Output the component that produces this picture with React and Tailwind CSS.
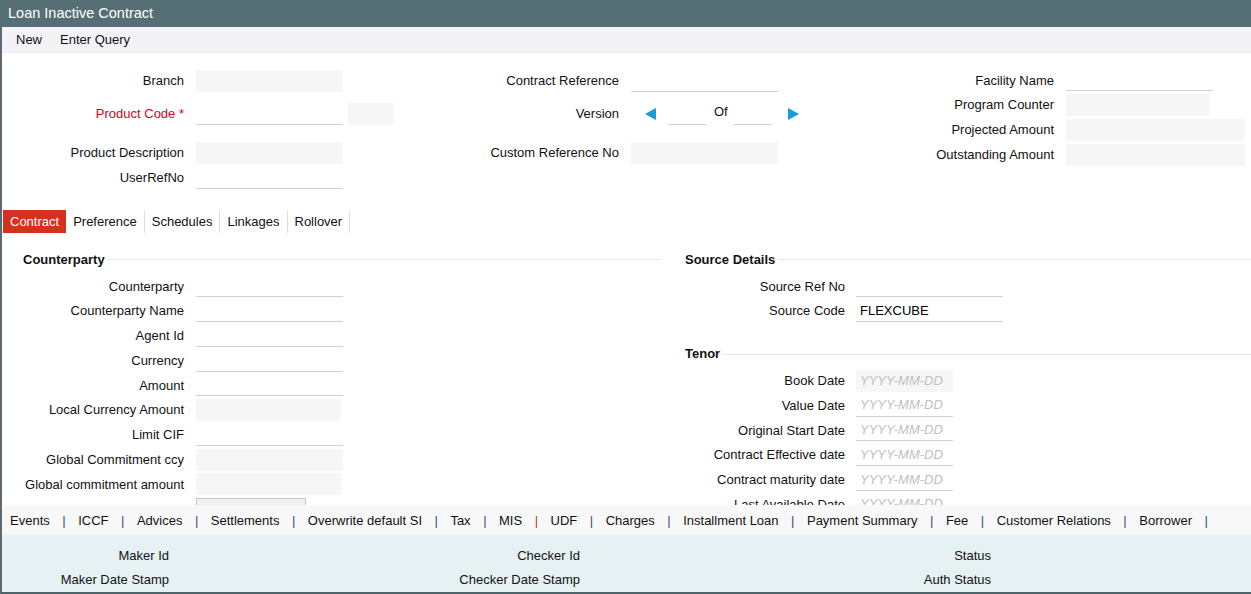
const FONT = "font-['Liberation_Sans',Arial,sans-serif]";

function Box({ kind = 'line', w = 147, value, placeholder, className = '' }) {
  const look =
    kind === 'gray'
      ? 'bg-[#f6f6f6]'
      : 'border-b border-[#d0d0d0] bg-white';
  return (
    <div className={`h-[22px] flex items-center pl-[4px] ${look} ${className}`} style={{ width: w }}>
      {value && <span className="text-[13px] text-black">{value}</span>}
      {placeholder && <span className="text-[13px] italic text-[#c0c0c0]">{placeholder}</span>}
    </div>
  );
}

function Row({ label, labelW, gap = 12, h = 'h-[25px]', red, children, className = '' }) {
  return (
    <div className={`flex items-center ${h} ${className}`}>
      <div
        className={`shrink-0 text-right text-[13px] whitespace-nowrap ${red ? 'text-[#d9001b]' : 'text-[#111]'}`}
        style={{ width: labelW, marginRight: gap }}
      >
        {label}
        {red && <span> *</span>}
      </div>
      {children}
    </div>
  );
}

function Legend({ title, className = '' }) {
  return (
    <div className={`flex items-center h-[18px] ${className}`}>
      <span className="text-[13px] font-bold text-[#111] whitespace-nowrap">{title}</span>
      <div className="flex-1 h-px bg-[#e6e6e6] ml-[3px]" />
    </div>
  );
}

function Tri({ dir }) {
  return (
    <svg width="11" height="12" viewBox="0 0 11 12">
      {dir === 'left' ? (
        <polygon points="11,0 11,12 0,6" fill="#1a9ad6" />
      ) : (
        <polygon points="0,0 0,12 11,6" fill="#1a9ad6" />
      )}
    </svg>
  );
}

const TABS = ['Contract', 'Preference', 'Schedules', 'Linkages', 'Rollover'];

const LINKS = [
  'Events', 'ICCF', 'Advices', 'Settlements', 'Overwrite default SI', 'Tax', 'MIS',
  'UDF', 'Charges', 'Installment Loan', 'Payment Summary', 'Fee', 'Customer Relations', 'Borrower',
];

export default function App() {
  const rowH = 'h-[24.75px]';
  return (
    <div className={`w-[1251px] h-[594px] overflow-hidden bg-white flex flex-col ${FONT}`}>
      {/* title bar */}
      <div className="h-[27px] shrink-0 bg-[#566f74] flex items-center px-[8px]">
        <span className="text-white text-[14.5px]">Loan Inactive Contract</span>
      </div>

      <div className="flex-1 flex flex-col border-l-2 border-[#5b6a72] border-b-[3px] border-b-[#4f6469]">
        {/* toolbar */}
        <div className="h-[26px] shrink-0 bg-[#f3f3f7] border-b border-[#e9e9ee] flex items-center gap-[18px] pl-[14px] pt-[1px] text-[13px] text-[#111]">
          <span>New</span>
          <span>Enter Query</span>
        </div>

        {/* header fields */}
        <div className="h-[151px] shrink-0 flex pt-[15px]">
          <div className="w-[435px] flex flex-col">
            <Row label="Branch" labelW={182}>
              <Box kind="gray" />
            </Row>
            <Row label="Product Code" labelW={182} red className="mt-[8px]">
              <Box />
              <Box kind="gray" w={46} className="ml-[5px]" />
            </Row>
            <Row label="Product Description" labelW={182} className="mt-[14px]">
              <Box kind="gray" />
            </Row>
            <Row label="UserRefNo" labelW={182}>
              <Box />
            </Row>
          </div>

          <div className="w-[435px] flex flex-col">
            <Row label="Contract Reference" labelW={182}>
              <Box />
            </Row>
            <Row label="Version" labelW={182} className="mt-[8px]">
              <div className="flex items-center">
                <div className="ml-[14px]"><Tri dir="left" /></div>
                <Box w={38} className="ml-[12px]" />
                <span className="text-[13px] text-[#111] ml-[8px] -mt-[4px]">Of</span>
                <Box w={38} className="ml-[6px]" />
                <div className="ml-[16px]"><Tri dir="right" /></div>
              </div>
            </Row>
            <Row label="Custom Reference No" labelW={182} className="mt-[14px]">
              <Box kind="gray" />
            </Row>
          </div>

          <div className="flex-1 flex flex-col">
            <Row label="Facility Name" labelW={182} h={rowH}>
              <Box />
            </Row>
            <Row label="Program Counter" labelW={182} h={rowH}>
              <Box kind="gray" w={144} />
            </Row>
            <Row label="Projected Amount" labelW={182} h={rowH}>
              <Box kind="gray" w={179} />
            </Row>
            <Row label="Outstanding Amount" labelW={182} h={rowH}>
              <Box kind="gray" w={179} />
            </Row>
          </div>
        </div>

        {/* tabs */}
        <div className="h-[29px] shrink-0 flex items-end pl-[1px]">
          <div className="flex h-[23px]">
            {TABS.map((t, i) => (
              <div
                key={t}
                className={`px-[7px] pt-[1px] flex items-center text-[13px] ${
                  i === 0 ? 'bg-[#d5311c] text-white' : 'text-[#111] border-r border-[#dedede]'
                }`}
              >
                {t}
              </div>
            ))}
          </div>
        </div>

        {/* tab content */}
        <div className="h-[272px] shrink-0 overflow-hidden flex">
          <div className="w-[658px] pl-[21px] pt-[17.5px] flex flex-col">
            <Legend title="Counterparty" />
            <div className="mt-[5.5px] flex flex-col">
              <Row label="Counterparty" labelW={161} h={rowH}><Box /></Row>
              <Row label="Counterparty Name" labelW={161} h={rowH}><Box /></Row>
              <Row label="Agent Id" labelW={161} h={rowH}><Box /></Row>
              <Row label="Currency" labelW={161} h={rowH}><Box /></Row>
              <Row label="Amount" labelW={161} h={rowH}><Box /></Row>
              <Row label="Local Currency Amount" labelW={161} h={rowH}><Box kind="gray" w={145} /></Row>
              <Row label="Limit CIF" labelW={161} h={rowH}><Box /></Row>
              <Row label="Global Commitment ccy" labelW={161} h={rowH}><Box kind="gray" /></Row>
              <Row label="Global commitment amount" labelW={161} h={rowH}><Box kind="gray" w={145} /></Row>
              <div className="ml-[173px] mt-[1px] w-[110px] h-[22px] border border-[#c9c9c9] bg-[#f1f1ef]" />
            </div>
          </div>

          <div className="flex-1 pl-[25px] pt-[17.5px] flex flex-col">
            <Legend title="Source Details" />
            <div className="mt-[5.5px] flex flex-col">
              <Row label="Source Ref No" labelW={160} gap={11} h={rowH}><Box /></Row>
              <Row label="Source Code" labelW={160} gap={11} h={rowH}><Box value="FLEXCUBE" /></Row>
            </div>
            <Legend title="Tenor" className="mt-[21.5px]" />
            <div className="mt-[5.5px] flex flex-col">
              <Row label="Book Date" labelW={160} gap={11} h={rowH}>
                <Box kind="gray" w={97} placeholder="YYYY-MM-DD" />
              </Row>
              <Row label="Value Date" labelW={160} gap={11} h={rowH}>
                <Box w={97} placeholder="YYYY-MM-DD" />
              </Row>
              <Row label="Original Start Date" labelW={160} gap={11} h={rowH}>
                <Box w={97} placeholder="YYYY-MM-DD" />
              </Row>
              <Row label="Contract Effective date" labelW={160} gap={11} h={rowH}>
                <Box w={97} placeholder="YYYY-MM-DD" />
              </Row>
              <Row label="Contract maturity date" labelW={160} gap={11} h={rowH}>
                <Box w={97} placeholder="YYYY-MM-DD" />
              </Row>
              <Row label="Last Available Date" labelW={160} gap={11} h={rowH}>
                <Box w={97} placeholder="YYYY-MM-DD" />
              </Row>
            </div>
          </div>
        </div>

        {/* sub-screen links */}
        <div className="h-[30px] shrink-0 bg-[#f8f8f8] flex items-center pl-[8px] pt-[2px] gap-[12.5px] text-[13px] text-[#111] whitespace-nowrap">
          {LINKS.map((l) => (
            <div key={l} className="flex items-center gap-[12.5px]">
              <span>{l}</span>
              <span className={l === 'MIS' ? 'text-[#c0392b]' : 'text-[#33527a]'}>|</span>
            </div>
          ))}
        </div>

        {/* audit footer */}
        <div className="flex-1 bg-[#e6f1f4] pt-[9px] flex text-[13px] text-[#111]">
          {[
            ['Maker Id', 'Maker Date Stamp'],
            ['Checker Id', 'Checker Date Stamp'],
            ['Status', 'Auth Status'],
          ].map((pair) => (
            <div key={pair[0]} className="w-[411px] flex flex-col">
              {pair.map((p) => (
                <div key={p} className="h-[24px] flex items-center">
                  <div className="w-[167px] text-right">{p}</div>
                </div>
              ))}
            </div>
          ))}
        </div>
      </div>
    </div>
  );
}
